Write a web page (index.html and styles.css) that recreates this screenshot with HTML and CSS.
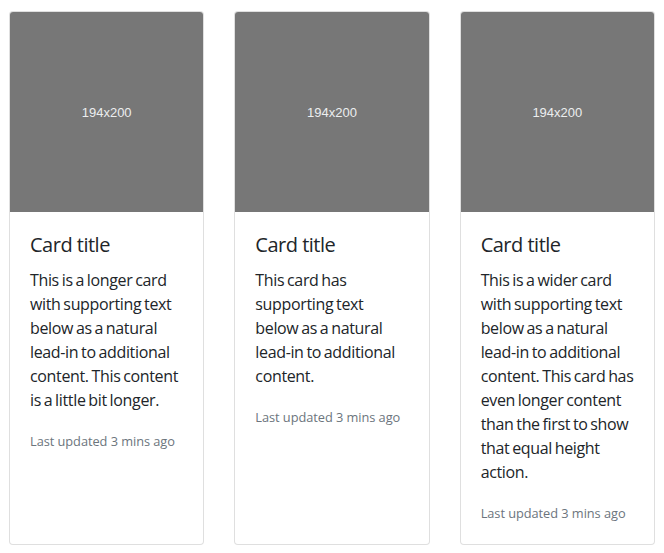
FILE: index.html
```html
<!DOCTYPE html>
<html>
<head>
<meta charset="utf-8">
<link rel="stylesheet" href="styles.css">
</head>
<body>
<div class="deck">
  <div class="card">
    <div class="thumb"><span>194x200</span></div>
    <div class="card-body">
      <h5 class="card-title">Card title</h5>
      <p class="card-text">This is a longer card with supporting text below as a natural lead-in to additional content. This content is a little bit longer.</p>
      <p class="card-text"><small class="muted">Last updated 3 mins ago</small></p>
    </div>
  </div>
  <div class="card">
    <div class="thumb"><span>194x200</span></div>
    <div class="card-body">
      <h5 class="card-title">Card title</h5>
      <p class="card-text">This card has supporting text below as a natural lead-in to additional content.</p>
      <p class="card-text"><small class="muted">Last updated 3 mins ago</small></p>
    </div>
  </div>
  <div class="card">
    <div class="thumb"><span>194x200</span></div>
    <div class="card-body">
      <h5 class="card-title">Card title</h5>
      <p class="card-text">This is a wider card with supporting text below as a natural lead-in to additional content. This card has even longer content than the first to show that equal height action.</p>
      <p class="card-text"><small class="muted">Last updated 3 mins ago</small></p>
    </div>
  </div>
</div>
</body>
</html>
```
FILE: styles.css
```css
html, body {
  margin: 0;
  padding: 0;
  background: #fff;
}
body {
  font-family: "Open Sans", "Noto Sans", sans-serif;
  font-size: 16px;
  line-height: 1.5;
  color: #212529;
}
.deck {
  display: flex;
  gap: 30px;
  padding: 11px 9px 8px 9px;
  align-items: stretch;
}
.card {
  flex: 1 1 0;
  min-width: 0;
  display: flex;
  flex-direction: column;
  border: 1px solid rgba(0, 0, 0, 0.125);
  border-radius: 4px;
  background: #fff;
  overflow: hidden;
}
.thumb {
  height: 200px;
  background: #777777;
  display: flex;
  align-items: center;
  justify-content: center;
}
.thumb span {
  font-family: "Liberation Sans", Arial, sans-serif;
  font-size: 13px;
  color: #eceeef;
  padding-top: 1px;
}
.card-body {
  flex: 1 1 auto;
  padding: 20px;
}
.card-title {
  margin: 0 0 12px 0;
  padding-top: 1px;
  font-size: 20px;
  font-weight: 400;
  line-height: 23px;
  letter-spacing: -0.5px;
}
.card-text {
  margin: 0 0 16px 0;
  letter-spacing: -0.35px;
  word-spacing: -1px;
}
.card-text:last-child {
  margin-bottom: 0;
}
.muted {
  font-size: 80%;
  color: #6c757d;
  letter-spacing: -0.05px;
  word-spacing: 0;
}
```
